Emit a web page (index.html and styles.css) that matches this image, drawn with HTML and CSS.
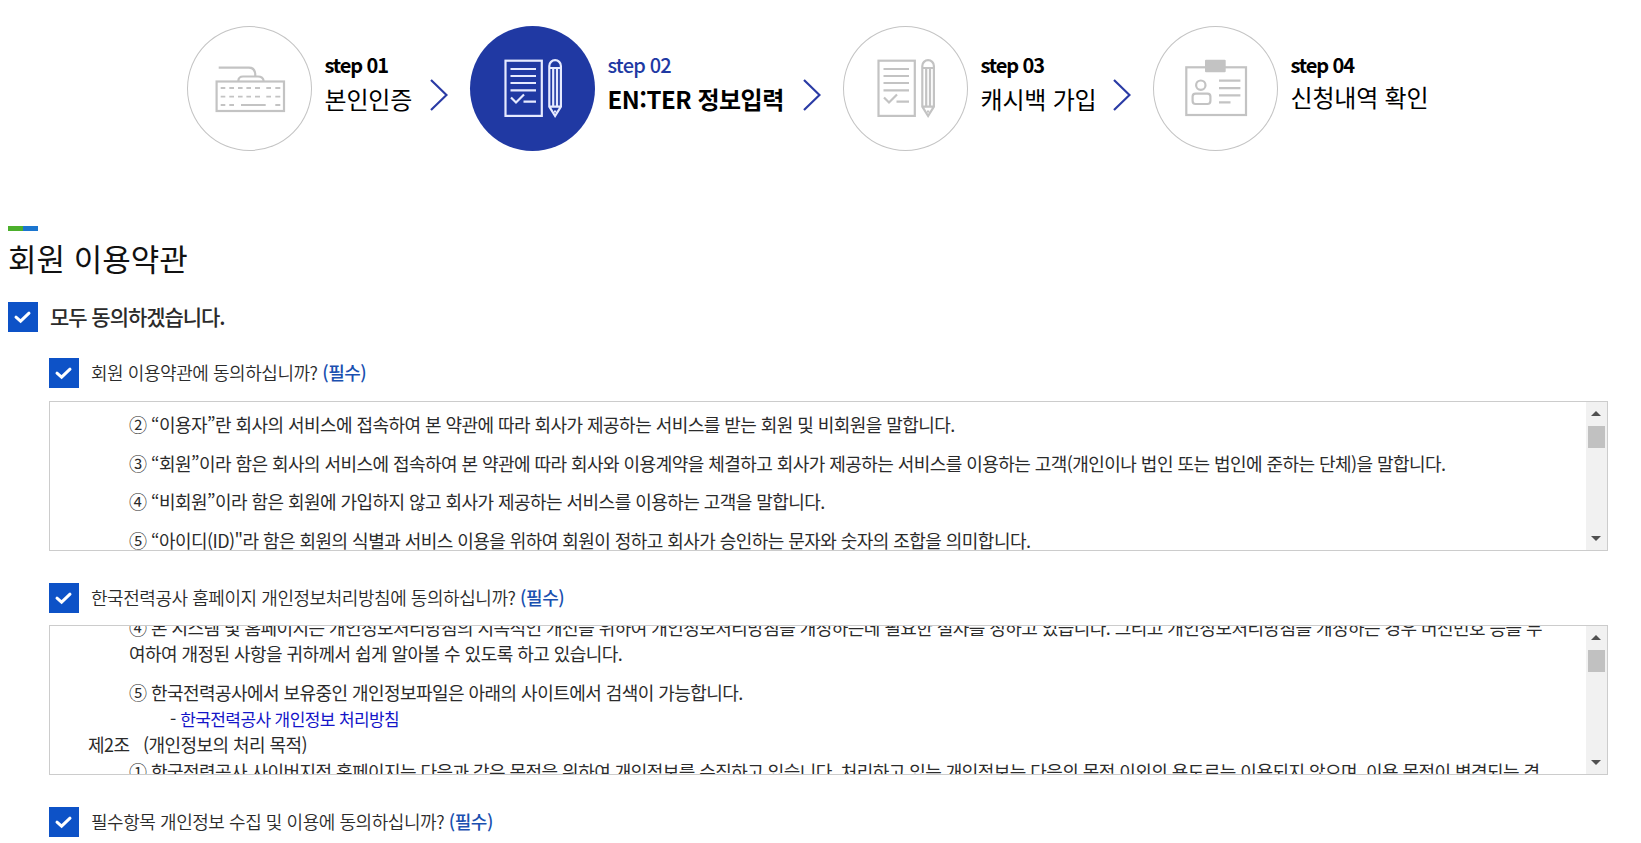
FILE: index.html
```html
<!DOCTYPE html>
<html lang="ko">
<head>
    <meta charset="UTF-8">
    <meta name="viewport" content="width=device-width, initial-scale=1.0">
    <title>회원 이용약관</title>
    <link rel="stylesheet" href="styles.css">
</head>
<body>
    <!-- icons -->
    <svg class="sprite" width="0" height="0">
        <symbol id="icon-form" viewBox="0 0 125 125">
            <rect x="35.5" y="34.7" width="36.3" height="55.2"/>
            <path d="M40.5 43H66M40.5 50H66M40.5 57H66M40.5 64.3H66M41 71.5l5 5 8-8M53.5 75.7H66"/>
            <path d="M79.3 80.7V40a5.8 5.8 0 0 1 11.6 0V80.7L85.1 90ZM79.3 42H90.9M79.3 80.7H90.9M83.2 42V80.7M87 42V80.7M84 85.5h2.2"/>
        </symbol>
        <symbol id="icon-check" viewBox="0 0 30 30">
            <path d="M8 15.2l4.6 4L21 11.2" fill="none" stroke="#fff" stroke-width="3" stroke-linecap="round"/>
        </symbol>
        <symbol id="icon-arrow" viewBox="0 0 18 32">
            <path d="M1 1L16.5 16L1 31" fill="none" stroke="#2a3ba5" stroke-width="2.2"/>
        </symbol>
    </svg>

    <ol class="steps">
        <li class="step step1">
            <svg class="circle" viewBox="0 0 125 125">
                <rect x="29.6" y="55.5" width="67.4" height="29.5"/>
                <path d="M31.7 41.7H62Q68.3 41.7 68.3 49.5M51.3 55Q51.5 50.5 56 50.5H71Q76 50.5 76.7 55"/>
                <path class="keys" d="M33.7 62h4.6m4 0h4.7m4 0h4.6m3.8 0h4.6m4 0h5m6.3 0h4.7m4.3 0h5M33.7 70.7h4.6m4 0h4.7m4 0h4.6m3.8 0h4.6m4 0h5m6.3 0h4.7m4.3 0h5M33.7 79h4.6m4 0h4.7m7 0h24.7m9.6 0h5"/>
            </svg>
            <div class="step-text"><em>step 01</em><span>본인인증</span></div>
            <svg class="arrow"><use href="#icon-arrow"/></svg>
        </li>
        <li class="step step2 on">
            <svg class="circle"><use href="#icon-form"/></svg>
            <div class="step-text"><em>step 02</em><span>EN:TER 정보입력</span></div>
            <svg class="arrow"><use href="#icon-arrow"/></svg>
        </li>
        <li class="step step3">
            <svg class="circle"><use href="#icon-form"/></svg>
            <div class="step-text"><em>step 03</em><span>캐시백 가입</span></div>
            <svg class="arrow"><use href="#icon-arrow"/></svg>
        </li>
        <li class="step step4">
            <svg class="circle" viewBox="0 0 125 125">
                <rect x="33.3" y="41.3" width="59.7" height="47.7"/>
                <rect class="clip" x="52" y="33.7" width="20.7" height="12.6" rx="1"/>
                <circle cx="47.8" cy="59.2" r="4.7"/>
                <rect x="39.6" y="67.6" width="17.8" height="10.4" rx="3"/>
                <path d="M66 54.7H87.4M66 62.2H87.4M66 69.3H87.4M66 76.3H77.5"/>
            </svg>
            <div class="step-text"><em>step 04</em><span>신청내역 확인</span></div>
        </li>
    </ol>

    <main>
        <h2>회원 이용약관</h2>
        <div class="agree agree-all">
            <svg class="check"><use href="#icon-check"/></svg>
            <strong>모두 동의하겠습니다.</strong>
        </div>

        <section class="terms">
            <div class="agree">
                <svg class="check"><use href="#icon-check"/></svg>
                <span class="label">회원 이용약관에 동의하십니까? <b>(필수)</b></span>
            </div>
            <div class="box">
                <div class="box-text box-text1">
                    <p>② “이용자”란 회사의 서비스에 접속하여 본 약관에 따라 회사가 제공하는 서비스를 받는 회원 및 비회원을 말합니다.</p>
                    <p>③ “회원”이라 함은 회사의 서비스에 접속하여 본 약관에 따라 회사와 이용계약을 체결하고 회사가 제공하는 서비스를 이용하는 고객(개인이나 법인 또는 법인에 준하는 단체)을 말합니다.</p>
                    <p>④ “비회원”이라 함은 회원에 가입하지 않고 회사가 제공하는 서비스를 이용하는 고객을 말합니다.</p>
                    <p>⑤ “아이디(ID)"라 함은 회원의 식별과 서비스 이용을 위하여 회원이 정하고 회사가 승인하는 문자와 숫자의 조합을 의미합니다.</p>
                </div>
                <div class="scrollbar"><i class="up"></i><i class="thumb"></i><i class="down"></i></div>
            </div>
        </section>

        <section class="terms">
            <div class="agree">
                <svg class="check"><use href="#icon-check"/></svg>
                <span class="label">한국전력공사 홈페이지 개인정보처리방침에 동의하십니까? <b>(필수)</b></span>
            </div>
            <div class="box box-privacy">
                <div class="box-text box-text2">
                    <p>④ 본 시스템 및 홈페이지는 개인정보처리방침의 지속적인 개선을 위하여 개인정보처리방침을 개정하는데 필요한 절차를 정하고 있습니다. 그리고 개인정보처리방침을 개정하는 경우 버전번호 등을 부<br>여하여 개정된 사항을 귀하께서 쉽게 알아볼 수 있도록 하고 있습니다.</p>
                    <p class="tight">⑤ 한국전력공사에서 보유중인 개인정보파일은 아래의 사이트에서 검색이 가능합니다.</p>
                    <p class="tight link">- <a href="#">한국전력공사 개인정보 처리방침</a></p>
                    <p class="tight article">제2조&nbsp;&nbsp; (개인정보의 처리 목적)</p>
                    <p>① 한국전력공사 사이버지점 홈페이지는 다음과 같은 목적을 위하여 개인정보를 수집하고 있습니다. 처리하고 있는 개인정보는 다음의 목적 이외의 용도로는 이용되지 않으며, 이용 목적이 변경되는 경</p>
                </div>
                <div class="scrollbar"><i class="up"></i><i class="thumb"></i><i class="down"></i></div>
            </div>
        </section>

        <section class="terms">
            <div class="agree">
                <svg class="check"><use href="#icon-check"/></svg>
                <span class="label">필수항목 개인정보 수집 및 이용에 동의하십니까? <b>(필수)</b></span>
            </div>
        </section>
    </main>
</body>
</html>
```
FILE: styles.css
```css
* {
    box-sizing: border-box;
}

body {
    font-family: 'Noto Sans CJK KR', 'Noto Sans', sans-serif;
    margin: 0;
    padding: 0;
    background-color: #fff;
    color: #2b2b2b;
    height: 843px;
    overflow: hidden;
}

.sprite {
    display: none;
}

.steps {
    display: flex;
    list-style: none;
    margin: 0;
    padding: 26px 0 0 187px;
    height: 226px;
}

.step {
    display: flex;
    height: 125px;
}

.step1 { width: 283px; }
.step2 { width: 373px; }
.step3 { width: 310px; }

.circle {
    flex: none;
    width: 125px;
    height: 125px;
    border-radius: 50%;
    box-shadow: inset 0 0 0 1px #c4c4c4;
    fill: none;
    stroke: #c3c3c3;
    stroke-width: 2.2;
}

.circle .keys {
    stroke-width: 1.8;
}

.circle .clip {
    fill: #c3c3c3;
    stroke: none;
}

.on .circle {
    background-color: #2039a3;
    box-shadow: none;
    stroke: #e6eaff;
}

.step-text {
    padding: 24px 0 0 12.5px;
    color: #000;
    white-space: nowrap;
}

.step-text em {
    display: block;
    font-size: 20px;
    line-height: 30px;
    font-style: normal;
    font-weight: 700;
    letter-spacing: -1.1px;
}

.step-text span {
    display: block;
    font-size: 24px;
    line-height: 38px;
    letter-spacing: -0.2px;
}

.on .step-text em {
    color: #2039a3;
    font-weight: 500;
    letter-spacing: -0.8px;
}

.on .step-text span {
    font-weight: 700;
    letter-spacing: -0.5px;
}

.step4 .step-text span {
    line-height: 34px;
}

.arrow {
    flex: none;
    width: 18px;
    height: 32px;
    margin: 53px 22px 0 auto;
}

main {
    padding-left: 8px;
}

h2 {
    margin: 0;
    font-size: 31px;
    line-height: 46px;
    font-weight: 400;
    color: #111;
}

/* two colour bar over the title */
h2::before {
    content: "";
    display: block;
    width: 30px;
    height: 5px;
    margin-bottom: 4px;
    background: linear-gradient(to right, #4caf2c 50%, #1b75cf 50%);
}

.agree {
    display: flex;
    align-items: center;
    height: 30px;
}

.agree-all {
    margin: 21px 0 26px;
}

.agree-all strong {
    font-size: 21px;
    font-weight: 500;
    letter-spacing: -1.05px;
    margin: 0 0 3px 12px;
}

.check {
    flex: none;
    width: 30px;
    height: 30px;
    background-color: #0d52c7;
}

.label {
    font-size: 18px;
    font-weight: 350;
    letter-spacing: -0.45px;
    margin: 0 0 3px 12px;
}

.label b {
    font-weight: 500;
    color: #1a50b0;
}

.terms {
    width: 1559px;
    margin: 0 0 32px 41px;
}

.box {
    display: flex;
    justify-content: space-between;
    height: 150px;
    margin-top: 13px;
    border: 1px solid #ccc;
    overflow: hidden;
}

.box-privacy {
    margin-top: 12px;
}

.box-text {
    padding-left: 79px;
    font-size: 18px;
    line-height: 26.4px;
    letter-spacing: -0.55px;
    white-space: nowrap;
}

.box-text1 {
    margin-top: 9px;
}

.box-text2 {
    margin-top: -12.5px;
}

.box-text p {
    margin: 0 0 12.3px;
}

.box-text .tight {
    margin-bottom: 0;
}

.box-text .link {
    padding-left: 41px;
}

.box-text .article {
    margin-left: -41px;
}

.box-text a {
    font-size: 17px;
    line-height: 1;
    letter-spacing: -0.6px;
    color: #1414c8;
    text-decoration: none;
}

.scrollbar {
    display: flex;
    flex-direction: column;
    align-items: center;
    flex: none;
    width: 21px;
    padding: 9px 1px 9px 0;
    background-color: #f1f1f1;
}

.up, .down {
    border: 5px solid transparent;
}

.up {
    border-top: 0;
    border-bottom-color: #505050;
}

.down {
    border-bottom: 0;
    border-top-color: #505050;
    margin-top: auto;
}

.thumb {
    width: 17px;
    height: 22px;
    margin-top: 10px;
    background-color: #c1c1c1;
}
```
